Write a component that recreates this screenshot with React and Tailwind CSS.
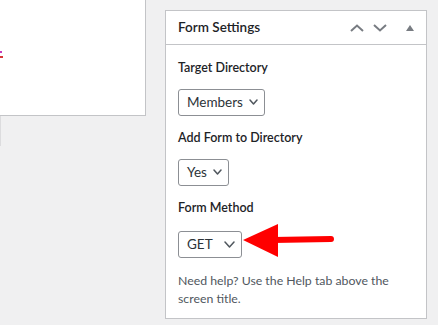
function Caret({ w = 8, h = 5 }) {
  return (
    <svg width={w} height={h + 2} viewBox={`0 0 ${w} ${h + 2}`} className="shrink-0">
      <polyline
        points={`1,1 ${w / 2},${h} ${w - 1},1`}
        fill="none"
        stroke="#50575e"
        strokeWidth="1.5"
        strokeLinecap="round"
        strokeLinejoin="round"
      />
    </svg>
  );
}

function Select({ label, width, caretW, caretH }) {
  return (
    <div
      className={`flex h-[27px] items-center justify-between rounded-[3px] border border-[#8c8f94] bg-white pl-2 pr-[6px] text-[13.5px] text-[#2c3338] ${width}`}
    >
      <span>{label}</span>
      <Caret w={caretW} h={caretH} />
    </div>
  );
}

export default function App() {
  return (
    <div
      className="flex h-[325px] w-[438px] overflow-hidden bg-[#f0f0f1]"
      style={{ fontFamily: 'Lato, "Liberation Sans", sans-serif' }}
    >
      {/* left content box */}
      <div className="w-[165px] shrink-0">
        <div className="relative h-[116px] w-[146px] border-b border-r border-[#c3c4c7] bg-white">
          <div className="absolute left-0 top-[51px] h-[2px] w-[2px] bg-[#c33ec0]" />
          <div className="absolute left-0 top-[56px] h-[2px] w-[3px] bg-[#d63638]" />
        </div>
        <div className="h-[30px] w-px bg-[#dcdcde]" />
      </div>

      {/* meta box */}
      <div className="mt-[10px] h-[309px] w-[262px] shrink-0 border border-[#c3c4c7] bg-white">
        <div className="flex h-[34px] items-center justify-between border-b border-[#c3c4c7] pl-3 pr-[12px]">
          <h2 className="text-[13.5px] font-semibold text-[#1d2327]">Form Settings</h2>
          <div className="flex items-center">
            <svg width="14" height="8" viewBox="0 0 14 8" className="mr-[9px]">
              <polyline points="1,7 7,1.5 13,7" fill="none" stroke="#787c82" strokeWidth="2" />
            </svg>
            <svg width="14" height="8" viewBox="0 0 14 8" className="mr-[19px]">
              <polyline points="1,1 7,6.5 13,1" fill="none" stroke="#787c82" strokeWidth="2" />
            </svg>
            <svg width="8" height="6" viewBox="0 0 8 6">
              <path d="M4 0 L8 6 L0 6 Z" fill="#787c82" />
            </svg>
          </div>
        </div>

        <div className="px-3 pt-[14px] text-[12.5px]">
          <p className="font-semibold leading-[18px] text-[#1d2327]">Target Directory</p>
          <div className="mt-[12px]">
            <Select label="Members" width="w-[87px]" caretW={9} caretH={5} />
          </div>

          <p className="mt-[13px] font-semibold leading-[18px] text-[#1d2327]">Add Form to Directory</p>
          <div className="mt-[12px]">
            <Select label="Yes" width="w-[51px]" caretW={9} caretH={5} />
          </div>

          <p className="mt-[13px] font-semibold leading-[18px] text-[#1d2327]">Form Method</p>
          <div className="relative mt-[14px]">
            <Select label="GET" width="w-[64px]" caretW={11} caretH={6} />
            <svg
              className="absolute left-[65px] top-[-7px]"
              width="96"
              height="34"
              viewBox="0 0 96 34"
            >
              <path d="M0 16 L35 0 L35 33 Z" fill="#ff0000" />
              <line x1="30" y1="16" x2="88" y2="15" stroke="#ff0000" strokeWidth="6" strokeLinecap="round" />
            </svg>
          </div>

          <p className="mt-[14px] text-[12.3px] leading-[18px] text-[#50575e]">
            Need help? Use the Help tab above the screen title.
          </p>
        </div>
      </div>
    </div>
  );
}
